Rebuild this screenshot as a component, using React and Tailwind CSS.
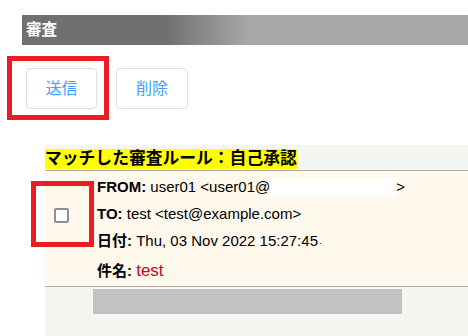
import React from 'react';

const font = { fontFamily: '"Liberation Sans", "Noto Sans CJK JP", sans-serif' };

export default function App() {
  return (
    <div
      className="relative w-[468px] h-[336px] overflow-hidden bg-white text-black"
      style={font}
    >
      {/* Title bar */}
      <div className="mt-[15px] ml-[22px] h-[30px] bg-[linear-gradient(90deg,#707070_32%,#a8a8a8_51%)] px-[4px] text-[15.5px] font-bold leading-[30px] text-white">
        審査
      </div>

      {/* Action buttons */}
      <div className="mt-[23px] ml-[26px] flex gap-[19px]">
        <button className="h-[41px] w-[71px] rounded-[4px] border border-[#dcdfe6] bg-white text-[16px] text-[#409eff]">
          送信
        </button>
        <button className="h-[41px] w-[72px] rounded-[4px] border border-[#dcdfe6] bg-white text-[16px] text-[#409eff]">
          削除
        </button>
      </div>

      {/* Matched rule section */}
      <div className="mt-[36px] ml-[45px] bg-[#f5f5f1] pb-[30px]">
        <div className="h-[26px] border-b border-[#b0aca8] pt-[2px]">
          <span className="inline-block h-[20px] bg-[#ffff00] text-[16.8px] font-bold leading-[20px]">
            マッチした審査ルール：自己承認
          </span>
        </div>

        <div className="flex h-[116px] border-b border-[#b0aca8] bg-[#fef8ed]">
          <div className="w-[52px] shrink-0 pl-[9px] pt-[37px]">
            <div className="h-[15px] w-[15px] rounded-[2px] border-2 border-[#8e8e9a] bg-white" />
          </div>
          <div className="pt-[2px] text-[15px] leading-[27px]">
            <div className="flex items-center whitespace-nowrap">
              <b>FROM:</b>&nbsp;user01 &lt;user01@
              <span className="inline-block h-[18px] w-[126px] bg-white" />
              &gt;
            </div>
            <div className="whitespace-nowrap">
              <b>TO:</b> test &lt;test@example.com&gt;
            </div>
            <div className="whitespace-nowrap">
              <b>日付:</b> Thu, 03 Nov 2022 15:27:45<span className="ml-[1px] text-[9px]">·</span>
            </div>
            <div className="h-[27px] whitespace-nowrap">
              <b>件名:</b> <span className="text-[17px] leading-none text-[#d0021b]">test</span>
            </div>
          </div>
        </div>

        <div className="mt-[2px] ml-[48px] h-[25px] w-[309px] bg-[#c2c2c2]" />
      </div>

      {/* Annotation boxes */}
      <div className="absolute left-[7px] top-[56px] h-[64px] w-[102px] border-[5px] border-[#ed1c24]" />
      <div className="absolute left-[31px] top-[181px] h-[66px] w-[63px] border-[5px] border-[#ed1c24]" />
    </div>
  );
}
